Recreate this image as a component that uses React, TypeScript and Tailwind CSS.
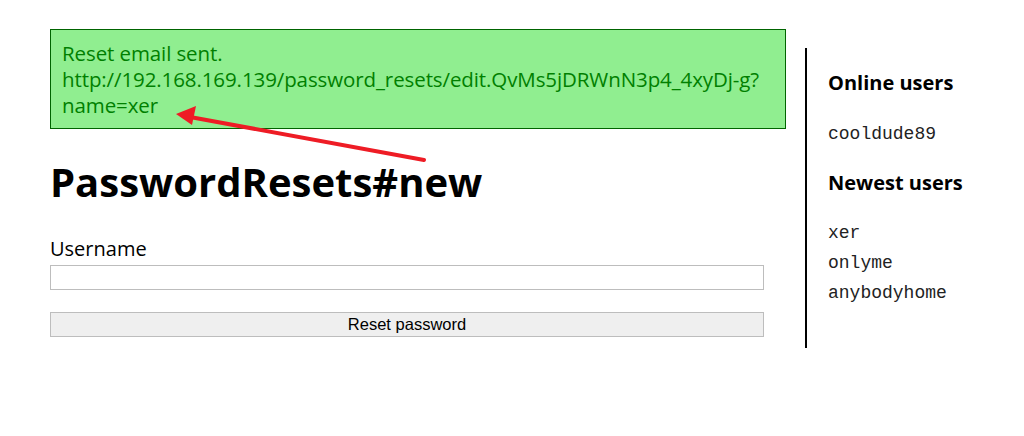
import React from "react";

export default function App() {
  const sans = { fontFamily: '"Open Sans", "Noto Sans", sans-serif' };
  const mono = { fontFamily: '"Liberation Mono", "DejaVu Sans Mono", monospace' };
  return (
    <div className="relative w-[1024px] h-[436px] bg-white overflow-hidden" style={sans}>
      <div className="flex pl-[50px] pt-[29px]">
        <div className="w-[736px] shrink-0">
          <div className="border border-[#006400] bg-[#90ee90] text-[#008000] px-[11px] py-[10px] text-[20.5px] leading-[26px] tracking-[-0.1px]">
            <div>Reset email sent.</div>
            <div>http://192.168.169.139/password_resets/edit.QvMs5jDRWnN3p4_4xyDj-g?</div>
            <div>name=xer</div>
          </div>
          <h1 className="mt-[27px] text-[40px] font-bold leading-[52px] text-black">PasswordResets#new</h1>
          <div className="mt-[28px] text-[20px] leading-[26px] text-black">Username</div>
          <div className="w-[714px] h-[25px] border border-[#bdbdbd] bg-white mt-[3px]" />
          <div
            className="mt-[22px] w-[714px] h-[25px] border border-[#bdbdbd] bg-[#efefef] flex items-center justify-center text-[16.5px] text-black"
            style={{ fontFamily: '"Liberation Sans", Arial, sans-serif' }}
          >
            Reset password
          </div>
        </div>
        <div className="ml-[19px] mt-[19px] h-[300px] border-l-2 border-black pl-[21px] pt-[22px]">
          <div className="text-[20px] font-bold leading-[26px]">Online users</div>
          <div className="mt-[23px] text-[18px] leading-[30px] text-[#222]" style={mono}>
            cooldude89
          </div>
          <div className="mt-[21px] text-[20px] font-bold leading-[26px]">Newest users</div>
          <div className="mt-[22px] text-[18px] leading-[30px] text-[#222]" style={mono}>
            <div>xer</div>
            <div>onlyme</div>
            <div>anybodyhome</div>
          </div>
        </div>
      </div>
      <svg className="absolute left-0 top-0" width="1024" height="436" viewBox="0 0 1024 436">
        <line x1="424" y1="160" x2="190" y2="117" stroke="#ee1c25" strokeWidth="4" strokeLinecap="round" />
        <polygon points="176,114 196,106 192,125" fill="#ee1c25" />
      </svg>
    </div>
  );
}
